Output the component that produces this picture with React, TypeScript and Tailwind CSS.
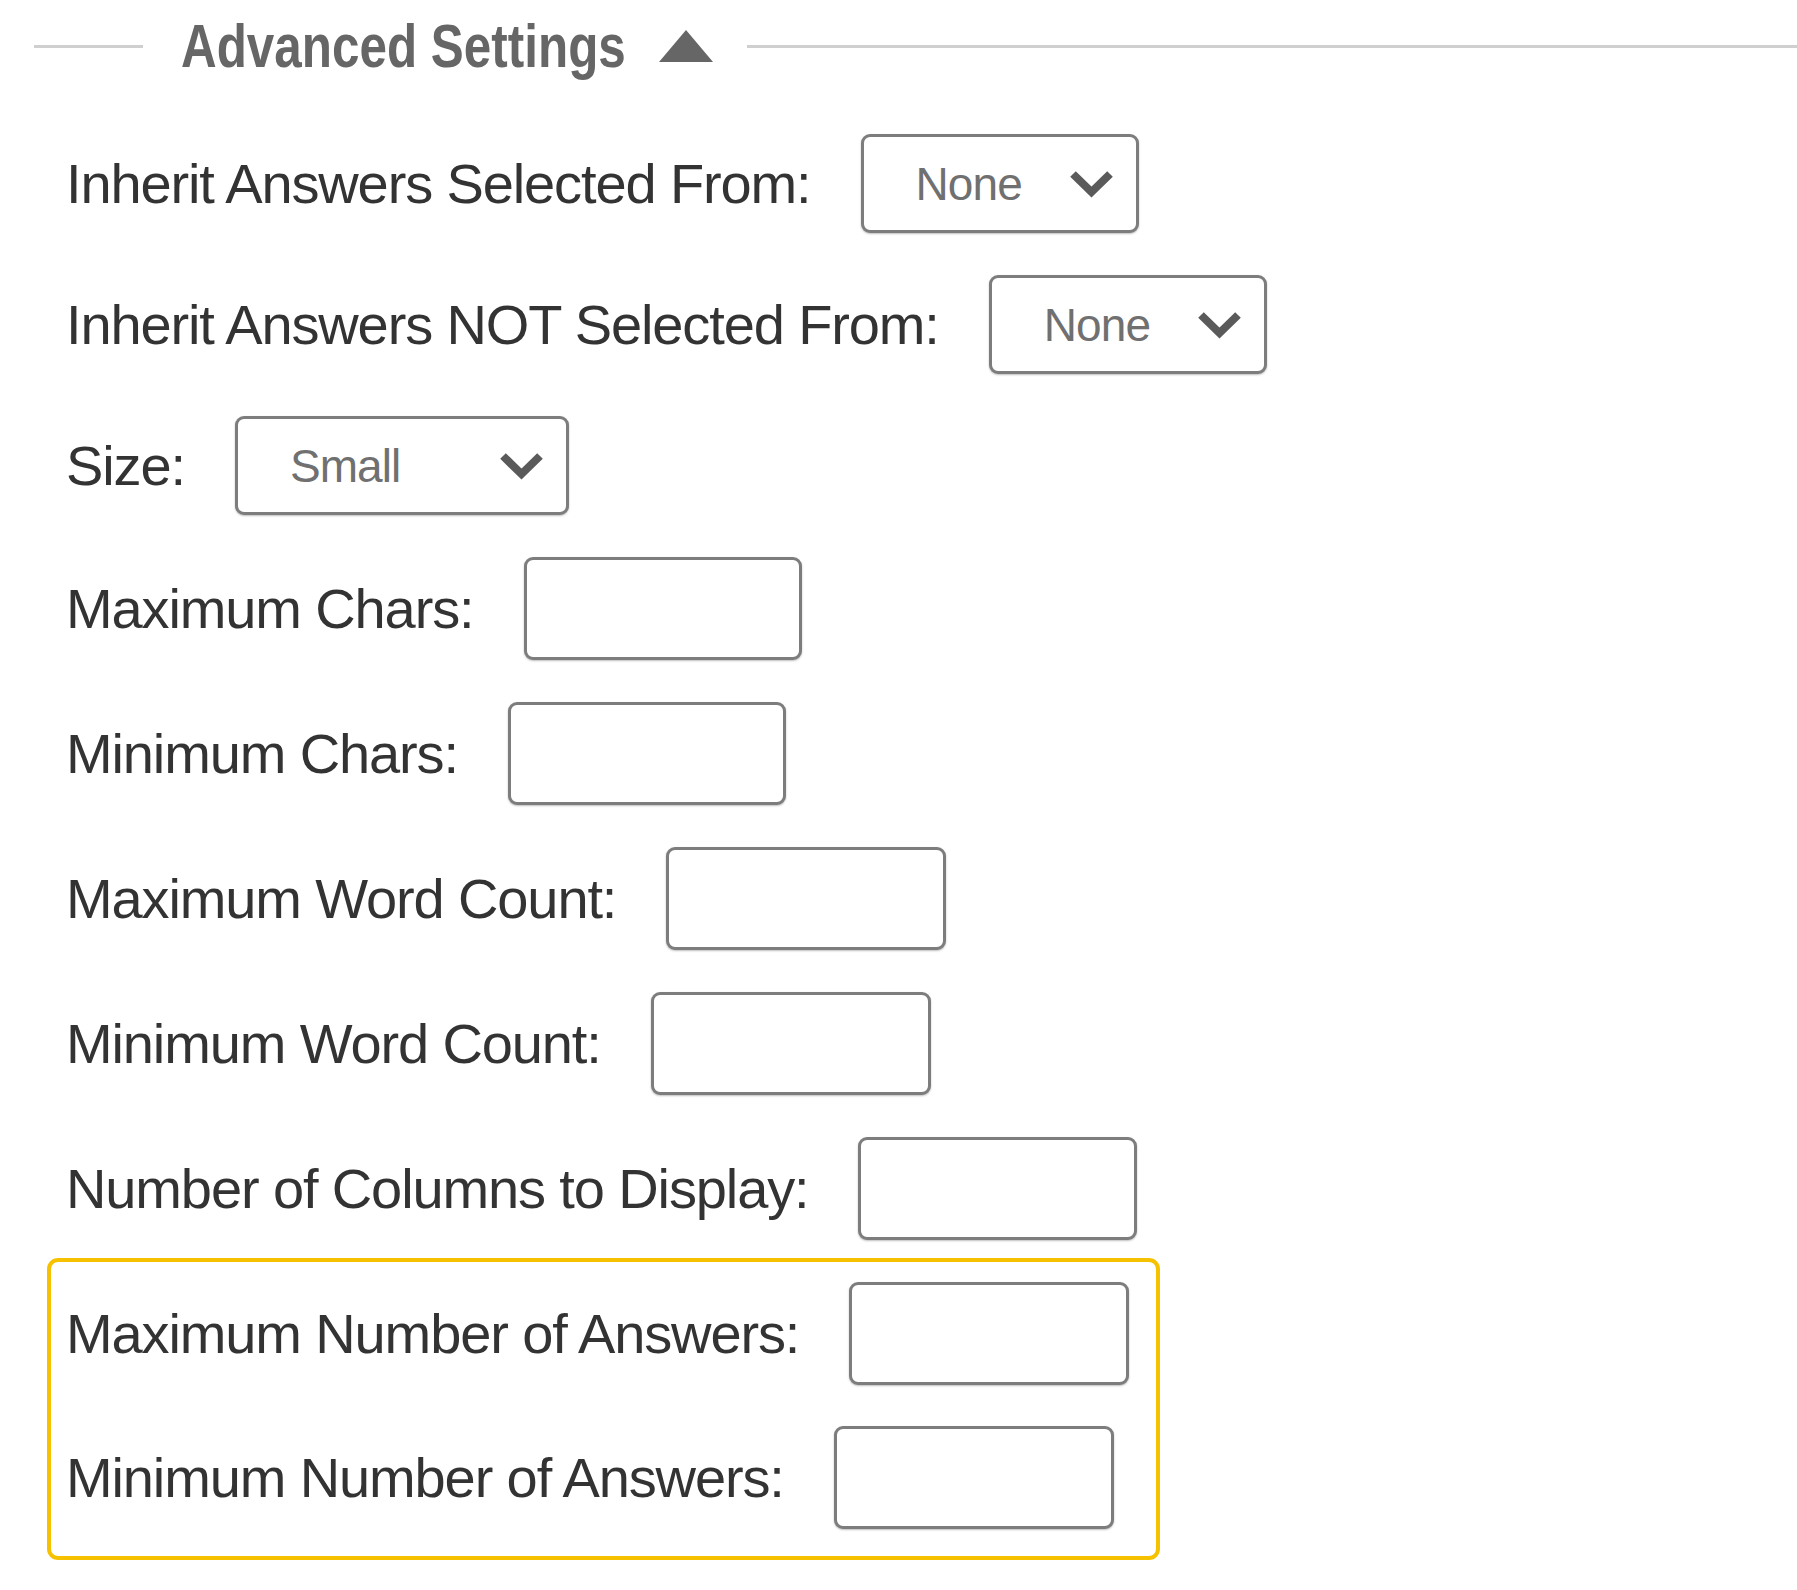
import React from 'react';

type Field = {
  label: string;
  kind: 'select' | 'input';
  value?: string;
  width: number;
};

const topFields: Field[] = [
  { label: 'Inherit Answers Selected From:', kind: 'select', value: 'None', width: 278 },
  { label: 'Inherit Answers NOT Selected From:', kind: 'select', value: 'None', width: 278 },
  { label: 'Size:', kind: 'select', value: 'Small', width: 334 },
  { label: 'Maximum Chars:', kind: 'input', width: 278 },
  { label: 'Minimum Chars:', kind: 'input', width: 278 },
  { label: 'Maximum Word Count:', kind: 'input', width: 280 },
  { label: 'Minimum Word Count:', kind: 'input', width: 280 },
  { label: 'Number of Columns to Display:', kind: 'input', width: 279 },
];

const boxedFields: Field[] = [
  { label: 'Maximum Number of Answers:', kind: 'input', width: 280 },
  { label: 'Minimum Number of Answers:', kind: 'input', width: 280 },
];

function Chevron() {
  return (
    <svg width="45" height="30" viewBox="0 0 45 30" className="shrink-0">
      <path d="M4 5 L22.5 23 L41 5" fill="none" stroke="#5a5a5a" strokeWidth="8" strokeLinejoin="miter" />
    </svg>
  );
}

function FieldRow({ field }: { field: Field }) {
  return (
    <div className="flex items-center gap-[50px]">
      <span className="text-[56px] leading-none tracking-[-0.02em] text-[#333333] whitespace-nowrap">
        {field.label}
      </span>
      {field.kind === 'select' ? (
        <div
          className="h-[99px] flex items-center justify-between pl-[52px] pr-[22px] border-[3px] border-[#7d7d7d] rounded-[9px] bg-white shadow-[0_1px_2px_rgba(0,0,0,0.25)]"
          style={{ width: field.width }}
        >
          <span className="text-[46px] leading-none tracking-[-0.02em] text-[#707070]">{field.value}</span>
          <Chevron />
        </div>
      ) : (
        <div
          className="h-[103px] border-[3px] border-[#7d7d7d] rounded-[9px] bg-white shadow-[0_1px_2px_rgba(0,0,0,0.25)]"
          style={{ width: field.width }}
        />
      )}
    </div>
  );
}

export default function App() {
  return (
    <div className="w-[1797px] h-[1590px] bg-white font-['Liberation_Sans',Arial,sans-serif] overflow-hidden">
      {/* Header */}
      <div className="h-[92px] flex items-center pl-[34px]">
        <div className="w-[109px] h-[3px] bg-[#cfcfcf]" />
        <div className="ml-[38px] w-[444px] shrink-0">
          <span className="inline-block origin-left scale-x-[0.81] text-[61px] leading-none font-bold text-[#666666] whitespace-nowrap">
            Advanced Settings
          </span>
        </div>
        <svg width="54" height="32" viewBox="0 0 54 32" className="ml-[34px] shrink-0">
          <polygon points="27,0 54,32 0,32" fill="#666666" />
        </svg>
        <div className="ml-[34px] flex-1 h-[3px] bg-[#cfcfcf]" />
      </div>

      <div className="pl-[47px] mt-[42px]">
        <div className="flex flex-col gap-[42px] pl-[19px]">
          {topFields.map((f) => (
            <FieldRow key={f.label} field={f} />
          ))}
        </div>

        {/* Highlighted group */}
        <div className="mt-[18px] w-[1113px] border-[4px] border-[#f6c200] rounded-[11px] pl-[15px] pt-[20px] pb-[27px] flex flex-col gap-[41px]">
          {boxedFields.map((f) => (
            <FieldRow key={f.label} field={f} />
          ))}
        </div>
      </div>
    </div>
  );
}
